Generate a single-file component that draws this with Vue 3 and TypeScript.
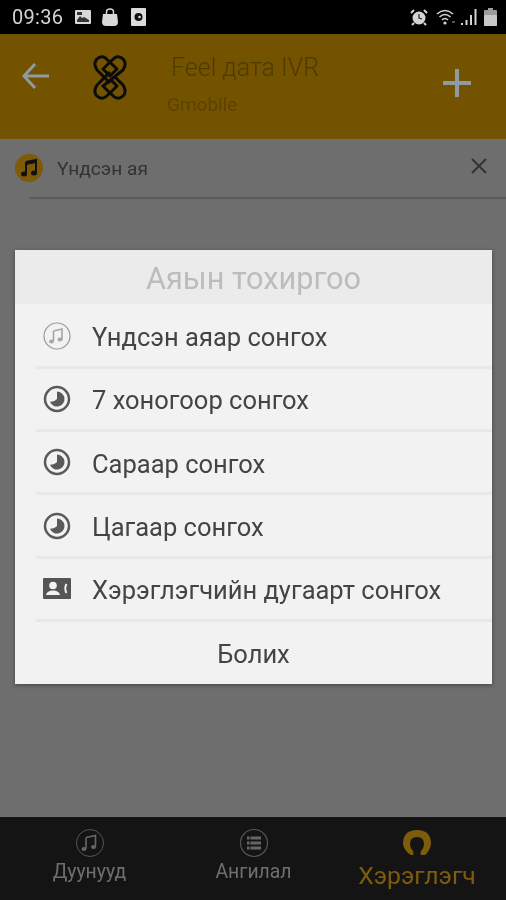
<template>
  <div class="screen">
    <div class="status-bar">
      <div class="status-left">
        <span class="clock">09:36</span>
        <svg width="18" height="16" viewBox="0 0 18 16"><rect x="1" y="1" width="16" height="14" rx="1" fill="#d8d8d8" /><path d="M3 11l3-4 2 2 2-1 5 3v2H3z" fill="#333" /><rect x="3" y="3" width="5" height="3" fill="#333" /></svg>
        <svg class="bag" width="18" height="18" viewBox="0 0 18 18"><path d="M2 6h14l1 8q0 4-4 4H5q-4 0-4-4z" fill="#d8d8d8" /><path d="M5.500 7V4q0-3 3.500-3t3.500 3v3" fill="none" stroke="#d8d8d8" stroke-width="1.500" /></svg>
        <svg class="card-ic" width="15" height="18" viewBox="0 0 15 18"><rect width="15" height="18" rx="1" fill="#dcdcdc" /><circle cx="7.500" cy="9" r="4" fill="#111" /><circle cx="8.500" cy="9" r="1.300" fill="#ddd" /></svg>
      </div>
      <div class="status-right">
        <svg width="18" height="18" viewBox="0 0 18 18"><circle cx="9" cy="10" r="6.500" fill="#d4d4d4" /><path d="M9 6v4l3 1" fill="none" stroke="#222" stroke-width="1.200" /><path d="M1 5l3-3M17 5l-3-3M4 15l-2 2M14 15l2 2" stroke="#d4d4d4" stroke-width="2" /></svg>
        <svg class="wifi" width="20" height="18" viewBox="0 0 20 18"><path d="M1 6q8-7 16 0M3.500 9q5.500-5 11 0M6 12q3-3 6 0" fill="none" stroke="#d4d4d4" stroke-width="1.600" /><circle cx="9" cy="15" r="1.600" fill="#d4d4d4" /><path d="M16 14h3" stroke="#aaa" stroke-width="1" /></svg>
        <svg class="signal" width="16" height="18" viewBox="0 0 16 18"><path d="M0 15h2v2H0zM4.500 12h2v5h-2zM9 7h2v10H9zM13.500 1h2v16h-2z" fill="#d4d4d4" /></svg>
        <svg class="battery" width="13" height="18" viewBox="0 0 13 18"><path d="M4 0h5v2h3q1 0 1 1v14q0 1-1 1H1q-1 0-1-1V3q0-1 1-1h3z" fill="#9c9c9c" /><rect y="7" width="13" height="11" rx="1" fill="#c8c8c8" /></svg>
      </div>
    </div>

    <header class="app-bar">
      <svg class="back" width="30" height="28" viewBox="0 0 30 28"><path d="M28 14H3M14 2L3 14l11 12" fill="none" stroke="#8f9aa3" stroke-width="3" /></svg>
      <svg class="logo" width="34" height="45" viewBox="0 0 34 45">
        <g fill="none" stroke="#0b0b0b" stroke-width="3" stroke-linejoin="round">
          <path d="M17 28L4 15Q0 9 3.500 4.500 8 0 12.500 3L24 14 17 21 10 14 17 7" />
          <path d="M17 7L21.500 3Q26 0 30.500 4.500 34 9 30 15L10 31 17 38 24 31 17 24" />
          <path d="M17 17L4 30Q0 36 3.500 40.500 8 45 12.500 42L17 38" />
          <path d="M17 38L21.500 42Q26 45 30.500 40.500 34 36 30 30L21 21" />
        </g>
      </svg>
      <div class="titles">
        <div class="title">Feel дата IVR</div>
        <div class="subtitle">Gmobile</div>
      </div>
      <svg class="plus" width="28" height="30" viewBox="0 0 28 30"><path d="M14 1v28M0 15h28" stroke="#8f9aa3" stroke-width="4" /></svg>
    </header>

    <main class="content">
      <div class="tone-row">
        <span class="tone-badge">
          <svg width="18" height="20" viewBox="0 0 18 20"><path d="M6 4l10-2v12.500" fill="none" stroke="#111" stroke-width="2" /><path d="M6 4v12" stroke="#111" stroke-width="2" /><ellipse cx="4" cy="16" rx="3" ry="2.500" fill="#111" /><ellipse cx="14" cy="15" rx="3" ry="2.500" fill="#111" /><path d="M6 4l10-2v3L6 7z" fill="#111" /></svg>
        </span>
        <span class="tone-name">Үндсэн ая</span>
        <svg class="close" width="18" height="18" viewBox="0 0 18 18"><path d="M2 2l14 14M16 2L2 16" stroke="#333" stroke-width="2" /></svg>
      </div>
      <div class="tone-line"></div>
    </main>

    <nav class="bottom-nav">
      <div v-for="tab in tabs" :key="tab.label" class="tab" :class="{ active: tab.active }">
        <svg v-if="tab.icon === 'music'" width="30" height="30" viewBox="0 0 30 30">
          <circle cx="15" cy="15" r="13.500" fill="none" stroke="#555" stroke-width="1" />
          <path d="M11 9.500l9.500-2v11M11 9.500V20.500" fill="none" stroke="#666" stroke-width="1.600" />
          <ellipse cx="9" cy="21" rx="2.500" ry="2" fill="#666" /><ellipse cx="18.500" cy="19" rx="2.500" ry="2" fill="#666" />
        </svg>
        <svg v-else-if="tab.icon === 'list'" width="30" height="30" viewBox="0 0 30 30">
          <circle cx="15" cy="15" r="13.500" fill="none" stroke="#555" stroke-width="1.200" />
          <path d="M8 10h14M8 15h14M8 20h14" stroke="#666" stroke-width="3" />
          <path d="M11 8v14" stroke="#1a1a1a" stroke-width="1" />
        </svg>
        <svg v-else width="30" height="28" viewBox="0 0 30 28">
          <path d="M9 26Q2 22 1 15 1 1 15 1t14 14q-1 7-6 11h-4q-1-1 0-4 3-3 3-7 0-7-7-7t-7 7q0 4 3 7 1 3 0 4z" fill="#7f5c0c" />
        </svg>
        <span class="tab-label">{{ tab.label }}</span>
      </div>
    </nav>

    <div class="dialog">
      <div class="dialog-title">Аяын тохиргоо</div>
      <div v-for="item in options" :key="item.label" class="option">
        <svg v-if="item.icon === 'note'" width="30" height="30" viewBox="0 0 30 30">
          <circle cx="15" cy="15" r="13" fill="none" stroke="#9a9a9a" stroke-width="1.200" />
          <path d="M11.500 10l8.500-2v10.500M11.500 10v10" fill="none" stroke="#a6a6a6" stroke-width="1.600" />
          <ellipse cx="9.500" cy="20.500" rx="2.500" ry="2" fill="#a6a6a6" /><ellipse cx="18" cy="18.500" rx="2.500" ry="2" fill="#a6a6a6" />
        </svg>
        <svg v-else-if="item.icon === 'clock'" width="30" height="30" viewBox="0 0 30 30">
          <circle cx="15" cy="15" r="12" fill="none" stroke="#5a5a5a" stroke-width="2.500" />
          <path d="M15 7.500a7.500 7.500 0 1 1-7 10.200Q13 17.500 15 15z" fill="#5a5a5a" />
        </svg>
        <svg v-else width="30" height="24" viewBox="0 0 30 24">
          <rect x="1" y="1" width="28" height="21" rx="1" fill="#555" />
          <circle cx="11" cy="8.500" r="3.800" fill="#f2f2f2" />
          <path d="M4 18q1-4.500 7-4.500t7 4.500z" fill="#f2f2f2" />
          <path d="M24.500 7q-2.500 4.500 0 9" fill="none" stroke="#f2f2f2" stroke-width="2" />
        </svg>
        <span>{{ item.label }}</span>
      </div>
      <div class="cancel">Болих</div>
    </div>
  </div>
</template>

<script setup lang="ts">
interface Tab {
  label: string;
  icon: string;
  active?: boolean;
}

const tabs: Tab[] = [
  { label: 'Дуунууд', icon: 'music' },
  { label: 'Ангилал', icon: 'list' },
  { label: 'Хэрэглэгч', icon: 'user', active: true },
];

const options = [
  { label: 'Үндсэн аяар сонгох', icon: 'note' },
  { label: '7 хоногоор сонгох', icon: 'clock' },
  { label: 'Сараар сонгох', icon: 'clock' },
  { label: 'Цагаар сонгох', icon: 'clock' },
  { label: 'Хэрэглэгчийн дугаарт сонгох', icon: 'card' },
];
</script>

<style>
body {
  background: #6e6e6e;
}
</style>

<style scoped>
.screen {
  position: relative;
  display: flex;
  flex-direction: column;
  width: 506px;
  height: 900px;
  overflow: hidden;
  background: #6e6e6e;
  font-family: Roboto, "Noto Sans", sans-serif;
  filter: blur(0.5px);
}

.status-bar {
  display: flex;
  justify-content: space-between;
  align-items: center;
  height: 34px;
  padding: 0 9px 0 12px;
  background: #000;
  color: #d4d4d4;
}

.status-left,
.status-right {
  display: flex;
  align-items: center;
}

.clock {
  font-size: 20px;
  margin-right: 11px;
  letter-spacing: 0.3px;
}

.bag {
  margin-left: 9px;
}

.card-ic {
  margin-left: 12px;
}

.wifi {
  margin-left: 8px;
}

.signal {
  margin-left: 5px;
}

.battery {
  margin-left: 7px;
}

.app-bar {
  display: flex;
  align-items: flex-start;
  height: 105px;
  padding-left: 21px;
  background: #735300;
}

.back {
  margin-top: 28px;
}

.logo {
  margin: 21px 0 0 42px;
}

.titles {
  margin-left: 40px;
  width: 275px;
}

.title {
  margin: 18px 0 0 4px;
  font-size: 25px;
  font-weight: 300;
  line-height: 32px;
  color: #4f3a00;
}

.subtitle {
  margin-top: 8px;
  font-size: 19px;
  line-height: 26px;
  color: #5c4300;
}

.plus {
  margin: 34px 0 0 1px;
}

.content {
  flex: 1;
  background: #6e6e6e;
}

.tone-row {
  display: flex;
  align-items: center;
  height: 58px;
  padding: 0 18px 0 15px;
  color: #333;
}

.tone-badge {
  display: flex;
  align-items: center;
  justify-content: center;
  width: 28px;
  height: 28px;
  border-radius: 50%;
  background: #7d5b08;
}

.tone-name {
  flex: 1;
  margin-left: 14px;
  font-size: 19.2px;
}

.close {
  margin-top: -4px;
}

.tone-line {
  height: 2px;
  margin-left: 29px;
  background: #5b5b5b;
}

.bottom-nav {
  display: grid;
  grid-template-columns: 179px 149px 178px;
  height: 83px;
  background: #141414;
}

.tab {
  display: flex;
  flex-direction: column;
  align-items: center;
  padding-top: 11px;
  color: #6f6f6f;
  font-size: 19.4px;
}

.tab-label {
  margin-top: 2px;
  line-height: 24px;
}

.tab.active {
  color: #7f5c0c;
  font-size: 24.8px;
  padding-top: 12px;
}

.tab.active svg {
  margin-bottom: 5px;
}

.dialog {
  position: absolute;
  left: 15px;
  top: 250px;
  width: 477px;
  height: 434px;
  background: #f2f2f2;
  box-shadow: 0 1px 4px rgba(0, 0, 0, 0.4);
}

.dialog-title {
  height: 54px;
  margin-bottom: 1.5px;
  background: #ebebeb;
  color: #bcbcbc;
  font-size: 30.700px;
  line-height: 58px;
  text-align: center;
}

.option {
  display: flex;
  align-items: center;
  height: 63.3px;
  box-sizing: border-box;
  margin-left: 21px;
  padding-top: 3px;
  border-bottom: 3px solid #e8e8e8;
  color: #444;
  font-size: 25.5px;
}

.option svg {
  width: 30px;
  margin: -3px 0 0 6px;
  flex-shrink: 0;
}

.option span {
  margin-left: 20px;
}

.cancel {
  height: 58px;
  color: #444;
  font-size: 25.5px;
  line-height: 64px;
  text-align: center;
}
</style>
